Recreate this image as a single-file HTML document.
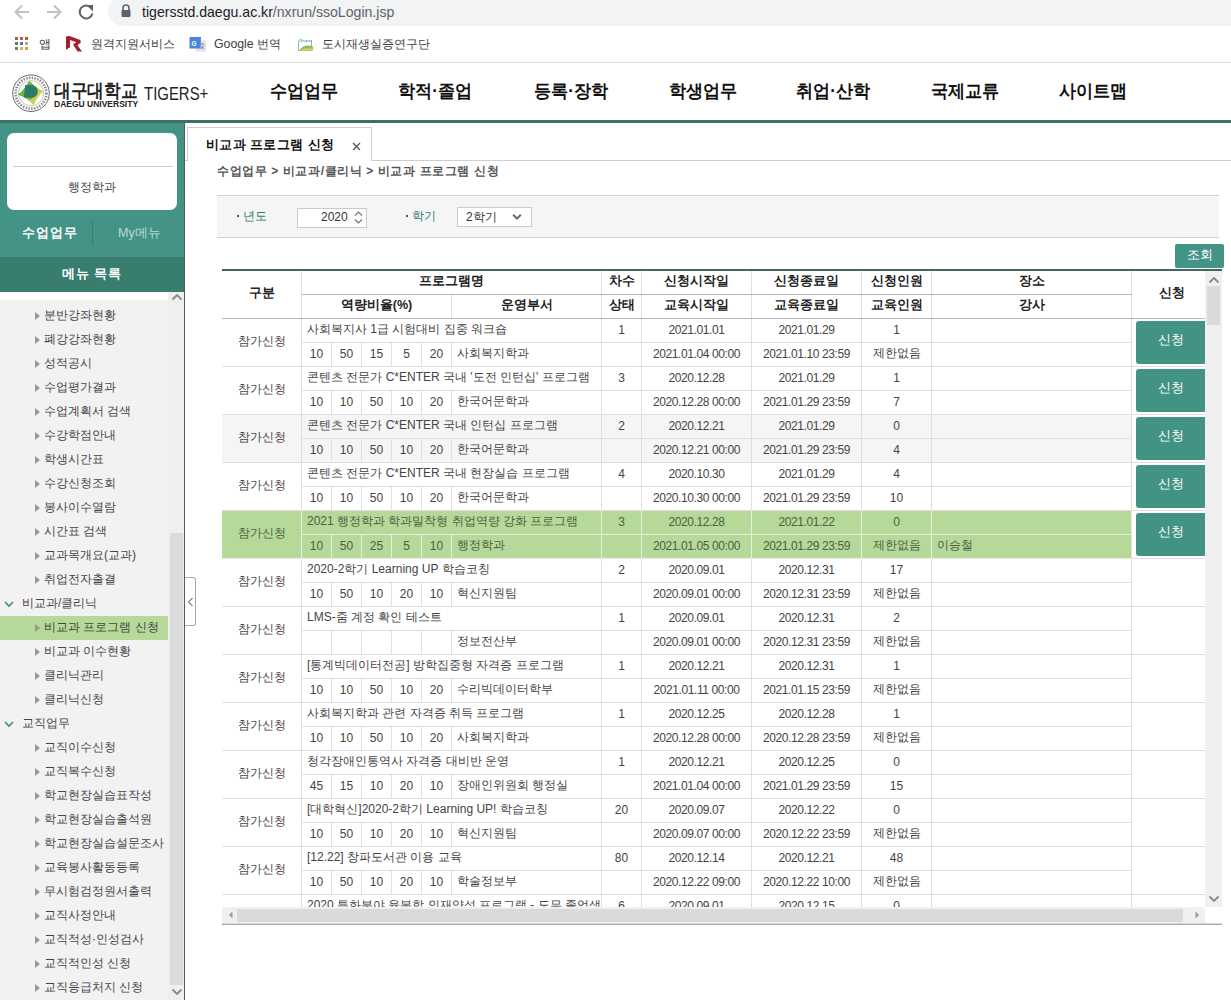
<!DOCTYPE html><html><head><meta charset="utf-8"><title>TIGERS+</title><style>
*{box-sizing:border-box;margin:0;padding:0}
html,body{width:1231px;height:1000px;overflow:hidden;background:#fff;font-family:"Liberation Sans",sans-serif;color:#333}
.a{position:absolute}
#chrome{left:0;top:0;width:1231px;height:63px;background:#fff}
#url{left:108px;top:-4px;width:1140px;height:30px;background:#f1f3f4;border-radius:15px}
#urltxt{left:142px;top:4px;font-size:14.1px;color:#202124;white-space:nowrap;letter-spacing:0}
#urltxt span{color:#5f6368}
#bmline{left:0;top:62px;width:1231px;height:1px;background:#dadce0}
.bm{font-size:12.3px;color:#3c4043;white-space:nowrap;top:36px}
#hdr{left:0;top:63px;width:1231px;height:57px;background:#fff}
#gline{left:0;top:120px;width:1231px;height:3px;background:#3d7067}
.nav{top:79px;font-size:18px;font-weight:bold;color:#111;white-space:nowrap;transform:scaleX(0.95);transform-origin:0 0}
#side{left:0;top:123px;width:184px;height:877px;background:#449387}
#sideb{left:184px;top:123px;width:1px;height:877px;background:#5a5a5a}
#card{left:7px;top:133px;width:170px;height:77px;background:#fff;border-radius:7px}
#carddiv{left:13px;top:166px;width:160px;height:1px;background:#cfcfcf}
#dept{left:0;top:179px;width:184px;text-align:center;font-size:12px;color:#444}
#tab1{left:22px;top:224px;font-size:13px;font-weight:bold;color:#fff;letter-spacing:1px}
#tabdiv{left:92px;top:220px;width:1px;height:25px;background:#3f7a6d}
#tab2{left:118px;top:225px;font-size:12.5px;color:#b9dcd4}
#menuhd{left:0;top:257px;width:184px;height:35px;background:#387d6e}
#menuhdt{left:0;top:265px;width:184px;text-align:center;font-size:13px;font-weight:bold;color:#fff;letter-spacing:1px}
#mlist{left:0;top:292px;width:184px;height:708px;background:#f2f2f2;overflow:hidden}
#mtop{left:0;top:292px;width:168px;height:8px;background:#fff}
#mtrack{left:168px;top:292px;width:16px;height:708px;background:#efefef}
#mthumb{left:170px;top:533px;width:13px;height:452px;background:#dcdcdc}
.mi{left:0;width:168px;height:24px;font-size:12px;color:#444;white-space:nowrap}
.mi .tx{position:absolute;left:44px;top:3px}
.mi .tri{position:absolute;left:35px;top:8px;width:0;height:0;border-top:4px solid transparent;border-bottom:4px solid transparent;border-left:5px solid #999}
.mi.l1 .tx{left:22px}
.mi.sel{background:#b6d898}
#main{left:185px;top:123px;width:1046px;height:877px;background:#fff}
#tab{left:187px;top:127px;width:185px;height:34px;background:#fff;border:1px solid #cfcfcf;border-bottom:none}
#tabline{left:185px;top:160px;width:1046px;height:1px;background:#cfcfcf}
#tabt{left:206px;top:137px;font-size:12.5px;font-weight:bold;color:#111;letter-spacing:0.4px;white-space:nowrap}
#tabx{left:350px;top:137px;font-size:14px;color:#555}
#crumb{left:217px;top:163px;font-size:12px;font-weight:bold;color:#555;letter-spacing:0.6px;white-space:nowrap}
#sbox{left:217px;top:195px;width:1002px;height:43px;background:#f5f5f5;border-top:1px solid #d3d3d3;border-bottom:1px solid #d3d3d3}
.lbl{top:208px;font-size:12px;color:#2e7a68;white-space:nowrap}
.dot{width:2px;height:2px;background:#555;top:215px}
#yr{left:297px;top:208px;width:70px;height:20px;background:#fff;border:1px solid #ccc}
#sem{left:457px;top:207px;width:75px;height:20px;background:#fff;border:1px solid #ccc}
#btnq{left:1175px;top:244px;width:49px;height:24px;background:#449387;border-radius:2px;color:#fff;font-size:12.5px;text-align:center;line-height:23px}
#gthick{left:222px;top:269px;width:1000px;height:2px;background:#3d6961}
#grid{left:222px;top:271px;width:983px;height:636px;overflow:hidden;background:#fff}
#vs{left:1205px;top:271px;width:17px;height:636px;background:#f0f0f0}
#vthumb{left:1207px;top:286px;width:13px;height:39px;background:#dadada}
#hs{left:222px;top:907px;width:983px;height:17px;background:#f0f0f0}
#hthumb{left:237px;top:909px;width:946px;height:13px;background:#dadada}
#gbot{left:222px;top:923px;width:1000px;height:2px;background:linear-gradient(#d8d8d8 50%,#a8a8a8 50%)}
table{border-collapse:collapse;table-layout:fixed;font-size:12px;color:#444}
td,th{border:1px solid #dfdfe3;height:24px;padding:0 0 2px 0;white-space:nowrap;overflow:hidden;text-align:center;font-weight:normal}
th{font-weight:bold;color:#222;font-size:12.5px;border-color:#b8b8b8 #dfdfe3}
td.l{text-align:left;padding-left:5px}
td.d{letter-spacing:-0.4px}
tr.g td{background:#b6d898;border-color:#e4efdc;color:#4c6242}
tr.h td{background:#f5f5f5}
td.btn{background:#fff !important;border-color:#e0e0e0 !important;padding:0}
.bt{display:block;margin:0 0 0 4px;width:74px;height:43px;background:#439385;border-radius:3px;color:#fff;font-size:12.5px;line-height:39px;text-align:center;text-indent:-5px}
</style></head><body>
<div id="chrome" class="a"></div>
<div id="url" class="a"></div>
<svg class="a" style="left:0px;top:0px" width="100" height="25" viewBox="0 0 100 25"><g fill="none" stroke="#bdc1c6" stroke-width="2"><path d="M29 12H16M22 5.5l-6.5 6.5 6.5 6.5"/><path d="M47 12h13M54 5.5l6.5 6.5-6.5 6.5"/></g><path d="M91.5 8.2A6.5 6.5 0 1 0 92.5 13.5" fill="none" stroke="#5f6368" stroke-width="2"/><path d="M86.5 5h6.5v6.5z" fill="#5f6368"/></svg>
<svg class="a" style="left:120px;top:4px" width="12" height="14" viewBox="0 0 12 14"><path d="M3 6V4a3 3 0 0 1 6 0v2" fill="none" stroke="#5f6368" stroke-width="1.6"/><rect x="1.5" y="6" width="9" height="7" rx="1" fill="#5f6368"/></svg>
<div id="urltxt" class="a">tigersstd.daegu.ac.kr<span>/nxrun/ssoLogin.jsp</span></div>
<svg class="a" style="left:15px;top:37px" width="14" height="14" viewBox="0 0 14 14"><rect x="0" y="0" width="3" height="3" fill="#b55a4a"/><rect x="5" y="0" width="3" height="3" fill="#b55a4a"/><rect x="10" y="0" width="3" height="3" fill="#b55a4a"/><rect x="0" y="5" width="3" height="3" fill="#5a8a5a"/><rect x="5" y="5" width="3" height="3" fill="#4a78b5"/><rect x="10" y="5" width="3" height="3" fill="#c8a060"/><rect x="0" y="10" width="3" height="3" fill="#5a8a5a"/><rect x="10" y="10" width="3" height="3" fill="#c8a060"/><rect x="5" y="10" width="3" height="3" fill="#d8b050"/></svg>
<div class="a bm" style="left:39px">앱</div>
<svg class="a" style="left:60px;top:30px" width="30" height="26" viewBox="0 0 30 26"><path d="M6 6.5L9.5 6 20.3 10 20.8 12.5 17.5 15.3 22 21.6 17.6 21.6 13 14.6 16.3 12.3 10 10 10 17.2 6 19.8z" fill="#a31f2b"/></svg>
<div class="a bm" style="left:91px">원격지원서비스</div>
<svg class="a" style="left:189px;top:37px" width="18" height="15" viewBox="0 0 18 15"><rect x="6.5" y="3.5" width="10.5" height="11" fill="#e3e3e3"/><path d="M11 7h4M13 6.5v1M11.5 8.5q1.5 3 3.5 3M14.5 8.5q-1 3-3 3" stroke="#777" stroke-width="0.8" fill="none"/><path d="M0.5 0h11.5l-0.5 11.5H0.5z" fill="#4a84e2"/><text x="2.6" y="8.6" font-size="6.5" font-weight="bold" fill="#fff" font-family="Liberation Sans">G</text></svg>
<div class="a bm" style="left:214px">Google 번역</div>
<svg class="a" style="left:298px;top:37px" width="16" height="14" viewBox="0 0 16 14"><path d="M0.5 13.5V4l2.5-2v3l2.5-2 1 2 2-2v2l2.5-2 1 2 1.5-2v10.5z" fill="#fff" stroke="#7fb8b8" stroke-width="1"/><path d="M1 13.5Q6 6 15 9.5v4z" fill="#9aba55"/><path d="M1 13.5Q8 10 15 12v1.5z" fill="#d7d26a"/></svg>
<div class="a bm" style="left:322px">도시재생실증연구단</div>
<div id="bmline" class="a"></div>
<div id="hdr" class="a"></div>
<svg class="a" style="left:8px;top:70px" width="46" height="46" viewBox="0 0 46 46"><circle cx="23" cy="23.2" r="18.3" fill="#fff" stroke="#6a6a6a" stroke-width="1"/><circle cx="23" cy="23.2" r="15.4" fill="none" stroke="#8c8c8c" stroke-width="2.6" stroke-dasharray="1.5 1.3"/><circle cx="23" cy="23.2" r="12.6" fill="#fff" stroke="#999" stroke-width="0.6"/><path d="M21.2 11Q28 17 35 21.6Q29 27 25.8 35Q18 28 10.1 24.8Q17 19 21.2 11z" fill="#d2cf48"/><path d="M21.2 11Q26 15 29 19Q26 28 22 30Q17 27 10.1 24.8Q17 19 21.2 11z" fill="#6bb04a"/><path d="M17.2 15L23.5 15.2A6.3 6.3 0 0 1 23.5 27.8L15.8 27.5z" fill="#2c7c6c"/></svg>
<div class="a" style="left:54px;top:78px;font-size:19px;font-weight:bold;color:#222;white-space:nowrap;transform:scaleX(0.875);transform-origin:0 0">대구대학교</div>
<div class="a" style="left:54px;top:99px;font-size:8.5px;font-weight:bold;color:#222;white-space:nowrap">DAEGU UNIVERSITY</div>
<div class="a" style="left:144px;top:83.5px;font-size:18px;color:#222;white-space:nowrap;transform:scaleX(0.83);transform-origin:0 0">TIGERS+</div>
<div class="a nav" style="left:270px">수업업무</div>
<div class="a nav" style="left:398px">학적·졸업</div>
<div class="a nav" style="left:534px">등록·장학</div>
<div class="a nav" style="left:669px">학생업무</div>
<div class="a nav" style="left:796px">취업·산학</div>
<div class="a nav" style="left:931px">국제교류</div>
<div class="a nav" style="left:1059px">사이트맵</div>
<div id="gline" class="a"></div>
<div id="side" class="a"></div>
<div id="card" class="a"></div><div id="carddiv" class="a"></div>
<div id="dept" class="a">행정학과</div>
<div id="tab1" class="a">수업업무</div><div id="tabdiv" class="a"></div><div id="tab2" class="a">My메뉴</div>
<div id="menuhd" class="a"></div><div id="menuhdt" class="a">메뉴 목록</div>
<div id="mlist" class="a"></div><div id="mtop" class="a"></div>
<div class="a mi" style="top:304px"><span class="tri"></span><span class="tx">분반강좌현황</span></div>
<div class="a mi" style="top:328px"><span class="tri"></span><span class="tx">폐강강좌현황</span></div>
<div class="a mi" style="top:352px"><span class="tri"></span><span class="tx">성적공시</span></div>
<div class="a mi" style="top:376px"><span class="tri"></span><span class="tx">수업평가결과</span></div>
<div class="a mi" style="top:400px"><span class="tri"></span><span class="tx">수업계획서 검색</span></div>
<div class="a mi" style="top:424px"><span class="tri"></span><span class="tx">수강학점안내</span></div>
<div class="a mi" style="top:448px"><span class="tri"></span><span class="tx">학생시간표</span></div>
<div class="a mi" style="top:472px"><span class="tri"></span><span class="tx">수강신청조회</span></div>
<div class="a mi" style="top:496px"><span class="tri"></span><span class="tx">봉사이수열람</span></div>
<div class="a mi" style="top:520px"><span class="tri"></span><span class="tx">시간표 검색</span></div>
<div class="a mi" style="top:544px"><span class="tri"></span><span class="tx">교과목개요(교과)</span></div>
<div class="a mi" style="top:568px"><span class="tri"></span><span class="tx">취업전자출결</span></div>
<div class="a mi l1" style="top:592px"><svg style="position:absolute;left:4px;top:9px" width="10" height="7" viewBox="0 0 10 7"><path d="M1 1l4 4 4-4" fill="none" stroke="#3e8a78" stroke-width="1.6"/></svg><span class="tx">비교과/클리닉</span></div>
<div class="a mi sel" style="top:616px"><span class="tri"></span><span class="tx">비교과 프로그램 신청</span></div>
<div class="a mi" style="top:640px"><span class="tri"></span><span class="tx">비교과 이수현황</span></div>
<div class="a mi" style="top:664px"><span class="tri"></span><span class="tx">클리닉관리</span></div>
<div class="a mi" style="top:688px"><span class="tri"></span><span class="tx">클리닉신청</span></div>
<div class="a mi l1" style="top:712px"><svg style="position:absolute;left:4px;top:9px" width="10" height="7" viewBox="0 0 10 7"><path d="M1 1l4 4 4-4" fill="none" stroke="#3e8a78" stroke-width="1.6"/></svg><span class="tx">교직업무</span></div>
<div class="a mi" style="top:736px"><span class="tri"></span><span class="tx">교직이수신청</span></div>
<div class="a mi" style="top:760px"><span class="tri"></span><span class="tx">교직복수신청</span></div>
<div class="a mi" style="top:784px"><span class="tri"></span><span class="tx">학교현장실습표작성</span></div>
<div class="a mi" style="top:808px"><span class="tri"></span><span class="tx">학교현장실습출석원</span></div>
<div class="a mi" style="top:832px"><span class="tri"></span><span class="tx">학교현장실습설문조사</span></div>
<div class="a mi" style="top:856px"><span class="tri"></span><span class="tx">교육봉사활동등록</span></div>
<div class="a mi" style="top:880px"><span class="tri"></span><span class="tx">무시험검정원서출력</span></div>
<div class="a mi" style="top:904px"><span class="tri"></span><span class="tx">교직사정안내</span></div>
<div class="a mi" style="top:928px"><span class="tri"></span><span class="tx">교직적성·인성검사</span></div>
<div class="a mi" style="top:952px"><span class="tri"></span><span class="tx">교직적인성 신청</span></div>
<div class="a mi" style="top:976px"><span class="tri"></span><span class="tx">교직응급처지 신청</span></div>
<div id="mtrack" class="a"></div><div id="mthumb" class="a"></div>
<svg class="a" style="left:171px;top:293px" width="12" height="8" viewBox="0 0 12 8"><path d="M1.5 6.5l4.5-4.5 4.5 4.5" fill="none" stroke="#888" stroke-width="1.8"/></svg>
<svg class="a" style="left:171px;top:988px" width="12" height="8" viewBox="0 0 12 8"><path d="M1.5 1.5l4.5 4.5 4.5-4.5" fill="none" stroke="#888" stroke-width="1.8"/></svg>
<div id="sideb" class="a"></div>
<div id="main" class="a"></div>
<div id="tabline" class="a"></div>
<div id="tab" class="a"></div>
<div id="tabt" class="a">비교과 프로그램 신청</div>
<svg class="a" style="left:352px;top:142px" width="9" height="9" viewBox="0 0 9 9"><path d="M1 1l7 7M8 1L1 8" stroke="#555" stroke-width="1.3"/></svg>
<div id="crumb" class="a">수업업무 &gt; 비교과/클리닉 &gt; 비교과 프로그램 신청</div>
<div class="a" style="left:185px;top:577px;width:11px;height:49px;background:#fff;border:1px solid #a8a8a8;border-left:none;border-radius:0 3px 3px 0"></div>
<svg class="a" style="left:187px;top:597px" width="7" height="10" viewBox="0 0 7 10"><path d="M5.5 1L1.5 5l4 4" fill="none" stroke="#888" stroke-width="1.2"/></svg>
<div id="sbox" class="a"></div>
<div class="a dot" style="left:237px"></div><div class="a lbl" style="left:243px">년도</div>
<div id="yr" class="a"></div>
<div class="a" style="left:321px;top:210px;font-size:12px;color:#333">2020</div>
<svg class="a" style="left:354px;top:210px" width="9" height="15" viewBox="0 0 9 15"><path d="M1 5.5l3.5-3.5 3.5 3.5M1 9.5l3.5 3.5 3.5-3.5" fill="none" stroke="#777" stroke-width="1.2"/></svg>
<div class="a dot" style="left:406px"></div><div class="a lbl" style="left:412px">학기</div>
<div id="sem" class="a"></div>
<div class="a" style="left:466px;top:209px;font-size:12px;color:#333">2학기</div>
<svg class="a" style="left:512px;top:213px" width="10" height="8" viewBox="0 0 10 8"><path d="M1.2 1.8l3.8 3.8 3.8-3.8" fill="none" stroke="#666" stroke-width="2"/></svg>
<div id="btnq" class="a">조회</div>
<div id="gthick" class="a"></div>
<div id="grid" class="a"><table style="width:983px;margin-left:-1px;margin-top:-1px">
<colgroup><col style="width:80px"><col style="width:30px"><col style="width:30px"><col style="width:30px"><col style="width:30px"><col style="width:30px"><col style="width:150px"><col style="width:40px"><col style="width:110px"><col style="width:110px"><col style="width:70px"><col style="width:200px"><col style="width:74px"></colgroup>
<tr><th rowspan="2" style="height:48px">구분</th><th colspan="6">프로그램명</th><th>차수</th><th>신청시작일</th><th>신청종료일</th><th>신청인원</th><th>장소</th><th rowspan="2" style="padding-left:6px">신청</th></tr>
<tr><th colspan="5">역량비율(%)</th><th>운영부서</th><th>상태</th><th>교육시작일</th><th>교육종료일</th><th>교육인원</th><th>강사</th></tr>
<tr><td rowspan="2">참가신청</td><td colspan="6" class="l">사회복지사 1급 시험대비 집중 워크숍</td><td>1</td><td class="d">2021.01.01</td><td class="d">2021.01.29</td><td>1</td><td class="l"></td><td rowspan="2" class="btn"><span class="bt">신청</span></td></tr>
<tr><td>10</td><td>50</td><td>15</td><td>5</td><td>20</td><td class="l">사회복지학과</td><td></td><td class="d">2021.01.04 00:00</td><td class="d">2021.01.10 23:59</td><td>제한없음</td><td class="l"></td></tr>
<tr><td rowspan="2">참가신청</td><td colspan="6" class="l">콘텐츠 전문가 C*ENTER 국내 &#x27;도전 인턴십&#x27; 프로그램</td><td>3</td><td class="d">2020.12.28</td><td class="d">2021.01.29</td><td>1</td><td class="l"></td><td rowspan="2" class="btn"><span class="bt">신청</span></td></tr>
<tr><td>10</td><td>10</td><td>50</td><td>10</td><td>20</td><td class="l">한국어문학과</td><td></td><td class="d">2020.12.28 00:00</td><td class="d">2021.01.29 23:59</td><td>7</td><td class="l"></td></tr>
<tr class="h"><td rowspan="2">참가신청</td><td colspan="6" class="l">콘텐츠 전문가 C*ENTER 국내 인턴십 프로그램</td><td>2</td><td class="d">2020.12.21</td><td class="d">2021.01.29</td><td>0</td><td class="l"></td><td rowspan="2" class="btn"><span class="bt">신청</span></td></tr>
<tr class="h"><td>10</td><td>10</td><td>50</td><td>10</td><td>20</td><td class="l">한국어문학과</td><td></td><td class="d">2020.12.21 00:00</td><td class="d">2021.01.29 23:59</td><td>4</td><td class="l"></td></tr>
<tr><td rowspan="2">참가신청</td><td colspan="6" class="l">콘텐츠 전문가 C*ENTER 국내 현장실습 프로그램</td><td>4</td><td class="d">2020.10.30</td><td class="d">2021.01.29</td><td>4</td><td class="l"></td><td rowspan="2" class="btn"><span class="bt">신청</span></td></tr>
<tr><td>10</td><td>10</td><td>50</td><td>10</td><td>20</td><td class="l">한국어문학과</td><td></td><td class="d">2020.10.30 00:00</td><td class="d">2021.01.29 23:59</td><td>10</td><td class="l"></td></tr>
<tr class="g"><td rowspan="2">참가신청</td><td colspan="6" class="l">2021 행정학과 학과밀착형 취업역량 강화 프로그램</td><td>3</td><td class="d">2020.12.28</td><td class="d">2021.01.22</td><td>0</td><td class="l"></td><td rowspan="2" class="btn"><span class="bt">신청</span></td></tr>
<tr class="g"><td>10</td><td>50</td><td>25</td><td>5</td><td>10</td><td class="l">행정학과</td><td></td><td class="d">2021.01.05 00:00</td><td class="d">2021.01.29 23:59</td><td>제한없음</td><td class="l">이승철</td></tr>
<tr><td rowspan="2">참가신청</td><td colspan="6" class="l">2020-2학기 Learning UP 학습코칭</td><td>2</td><td class="d">2020.09.01</td><td class="d">2020.12.31</td><td>17</td><td class="l"></td><td rowspan="2" class="btn"></td></tr>
<tr><td>10</td><td>50</td><td>10</td><td>20</td><td>10</td><td class="l">혁신지원팀</td><td></td><td class="d">2020.09.01 00:00</td><td class="d">2020.12.31 23:59</td><td>제한없음</td><td class="l"></td></tr>
<tr><td rowspan="2">참가신청</td><td colspan="6" class="l">LMS-줌 계정 확인 테스트</td><td>1</td><td class="d">2020.09.01</td><td class="d">2020.12.31</td><td>2</td><td class="l"></td><td rowspan="2" class="btn"></td></tr>
<tr><td></td><td></td><td></td><td></td><td></td><td class="l">정보전산부</td><td></td><td class="d">2020.09.01 00:00</td><td class="d">2020.12.31 23:59</td><td>제한없음</td><td class="l"></td></tr>
<tr><td rowspan="2">참가신청</td><td colspan="6" class="l">[통계빅데이터전공] 방학집중형 자격증 프로그램</td><td>1</td><td class="d">2020.12.21</td><td class="d">2020.12.31</td><td>1</td><td class="l"></td><td rowspan="2" class="btn"></td></tr>
<tr><td>10</td><td>10</td><td>50</td><td>10</td><td>20</td><td class="l">수리빅데이터학부</td><td></td><td class="d">2021.01.11 00:00</td><td class="d">2021.01.15 23:59</td><td>제한없음</td><td class="l"></td></tr>
<tr><td rowspan="2">참가신청</td><td colspan="6" class="l">사회복지학과 관련 자격증 취득 프로그램</td><td>1</td><td class="d">2020.12.25</td><td class="d">2020.12.28</td><td>1</td><td class="l"></td><td rowspan="2" class="btn"></td></tr>
<tr><td>10</td><td>10</td><td>50</td><td>10</td><td>20</td><td class="l">사회복지학과</td><td></td><td class="d">2020.12.28 00:00</td><td class="d">2020.12.28 23:59</td><td>제한없음</td><td class="l"></td></tr>
<tr><td rowspan="2">참가신청</td><td colspan="6" class="l">청각장애인통역사 자격증 대비반 운영</td><td>1</td><td class="d">2020.12.21</td><td class="d">2020.12.25</td><td>0</td><td class="l"></td><td rowspan="2" class="btn"></td></tr>
<tr><td>45</td><td>15</td><td>10</td><td>20</td><td>10</td><td class="l">장애인위원회 행정실</td><td></td><td class="d">2021.01.04 00:00</td><td class="d">2021.01.29 23:59</td><td>15</td><td class="l"></td></tr>
<tr><td rowspan="2">참가신청</td><td colspan="6" class="l">[대학혁신]2020-2학기 Learning UP! 학습코칭</td><td>20</td><td class="d">2020.09.07</td><td class="d">2020.12.22</td><td>0</td><td class="l"></td><td rowspan="2" class="btn"></td></tr>
<tr><td>10</td><td>50</td><td>10</td><td>20</td><td>10</td><td class="l">혁신지원팀</td><td></td><td class="d">2020.09.07 00:00</td><td class="d">2020.12.22 23:59</td><td>제한없음</td><td class="l"></td></tr>
<tr><td rowspan="2">참가신청</td><td colspan="6" class="l">[12.22] 창파도서관 이용 교육</td><td>80</td><td class="d">2020.12.14</td><td class="d">2020.12.21</td><td>48</td><td class="l"></td><td rowspan="2" class="btn"></td></tr>
<tr><td>10</td><td>50</td><td>10</td><td>20</td><td>10</td><td class="l">학술정보부</td><td></td><td class="d">2020.12.22 09:00</td><td class="d">2020.12.22 10:00</td><td>제한없음</td><td class="l"></td></tr>
<tr><td rowspan="2">참가신청</td><td colspan="6" class="l">2020 특화분야 융복합 인재양성 프로그램 - 도무 졸업생 역량</td><td>6</td><td class="d">2020.09.01</td><td class="d">2020.12.15</td><td>0</td><td class="l"></td><td rowspan="2" class="btn"></td></tr>
<tr><td>10</td><td>50</td><td>10</td><td>20</td><td>10</td><td class="l">혁신지원팀</td><td></td><td class="d">2020.09.01 00:00</td><td class="d">2020.12.15 23:59</td><td>제한없음</td><td class="l"></td></tr>
</table></div>
<div id="vs" class="a"></div><div id="vthumb" class="a"></div>
<svg class="a" style="left:1208px;top:276px" width="12" height="8" viewBox="0 0 12 8"><path d="M1.5 6.5l4.5-4.5 4.5 4.5" fill="none" stroke="#888" stroke-width="1.8"/></svg>
<svg class="a" style="left:1208px;top:895px" width="12" height="8" viewBox="0 0 12 8"><path d="M1.5 1.5l4.5 4.5 4.5-4.5" fill="none" stroke="#888" stroke-width="1.8"/></svg>
<div id="hs" class="a"></div><div id="hthumb" class="a"></div>
<svg class="a" style="left:228px;top:911px" width="6" height="8" viewBox="0 0 6 8"><path d="M4.5 0.5v7L1 4z" fill="#999"/></svg>
<svg class="a" style="left:1194px;top:911px" width="6" height="8" viewBox="0 0 6 8"><path d="M1.5 0.5v7L5 4z" fill="#999"/></svg>
<div id="gbot" class="a"></div>
</body></html>
